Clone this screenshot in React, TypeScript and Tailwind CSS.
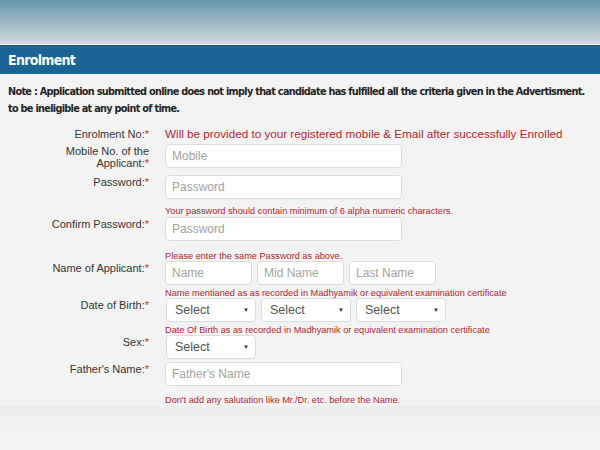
const Star = () => <span className="text-[#c0303a]">*</span>;

function Label({ children }: { children: React.ReactNode }) {
  return (
    <div className="w-[149px] h-[24px] shrink-0 text-right text-[11px] leading-[12px] text-[#333] pt-[1px]">
      {children}
      <Star />
    </div>
  );
}

function Hint({ text, className = "" }: { text: string; className?: string }) {
  return (
    <div
      className={`ml-[165px] h-[10px] text-[9.2px] leading-[10px] text-[#b3242e] whitespace-nowrap ${className}`}
    >
      {text}
    </div>
  );
}

function TextBox({ placeholder, w = "w-[237px]" }: { placeholder: string; w?: string }) {
  return (
    <div
      className={`${w} h-[24px] shrink-0 bg-white border border-[#dcdcdc] rounded-[4px] flex items-center pl-[6px] text-[12px] text-[#a3a3a3]`}
    >
      {placeholder}
    </div>
  );
}

function SelectBox({ w = "w-[90px]" }: { w?: string }) {
  return (
    <div
      className={`${w} h-[24px] shrink-0 bg-white border border-[#dcdcdc] rounded-[4px] flex items-center justify-between pl-[8px] pr-[6px] text-[12.5px] text-[#555]`}
    >
      <span>Select</span>
      <span className="text-[6px] text-[#333]">▼</span>
    </div>
  );
}

export default function App() {
  return (
    <div
      className="w-[600px] h-[450px] overflow-hidden bg-[#f3f3f3] flex flex-col"
      style={{ fontFamily: '"Liberation Sans", Arial, sans-serif' }}
    >
      {/* banner strip */}
      <div className="h-[44px] shrink-0 bg-gradient-to-b from-[#6598af] to-[#d2d9dc]" />
      <div className="h-[1px] shrink-0 bg-white" />
      <div className="h-[29px] shrink-0 bg-[#1b6493] border-t border-[#16557d] flex items-center px-[8px]">
        <span
          className="text-white font-bold text-[14px] tracking-[-0.7px]"
          style={{ fontFamily: '"DejaVu Sans Condensed", "DejaVu Sans", sans-serif' }}
        >
          Enrolment
        </span>
      </div>

      {/* note */}
      <div
        className="pt-[9px] pl-[8px] font-bold text-[10.8px] tracking-[-0.7px] leading-[17px] text-[#222] whitespace-nowrap"
        style={{ fontFamily: '"DejaVu Sans Condensed", "DejaVu Sans", sans-serif' }}
      >
        <div>
          Note : Application submitted online does not imply that candidate has fulfilled all the criteria given in the Advertisment.
        </div>
        <div>to be ineligible at any point of time.</div>
      </div>

      {/* form */}
      <div className="flex flex-col">
        <div className="flex items-center gap-[16px] mt-[9px] h-[16px]">
          <div className="w-[149px] shrink-0 text-right text-[11px] text-[#333]">
            Enrolment No:<Star />
          </div>
          <span className="text-[11.7px] text-[#b3262f] whitespace-nowrap">
            Will be provided to your registered mobile &amp; Email after successfully Enrolled
          </span>
        </div>

        <div className="flex gap-[16px] mt-[2px]">
          <Label>
            Mobile No. of the
            <br />
            Applicant:
          </Label>
          <TextBox placeholder="Mobile" />
        </div>

        <div className="flex gap-[16px] mt-[7px]">
          <Label>Password:</Label>
          <TextBox placeholder="Password" />
        </div>

        <Hint
          className="mt-[7px] mb-[1px]"
          text="Your password should contain minimum of 6 alpha numeric characters."
        />

        <div className="flex gap-[16px]">
          <Label>Confirm Password:</Label>
          <TextBox placeholder="Password" />
        </div>

        <Hint className="mt-[10px]" text="Please enter the same Password as above." />

        <div className="flex gap-[16px]">
          <Label>Name of Applicant:</Label>
          <div className="flex gap-[5px]">
            <TextBox placeholder="Name" w="w-[87px]" />
            <TextBox placeholder="Mid Name" w="w-[87px]" />
            <TextBox placeholder="Last Name" w="w-[87px]" />
          </div>
        </div>

        <Hint
          className="mt-[3px]"
          text="Name mentianed as as recorded in Madhyamik or equivalent examination certificate"
        />

        <div className="flex gap-[16px]">
          <Label>Date of Birth:</Label>
          <div className="flex gap-[5px] pl-[1px]">
            <SelectBox />
            <SelectBox />
            <SelectBox />
          </div>
        </div>

        <Hint
          className="mt-[3px]"
          text="Date Of Birth as as recorded in Madhyamik or equivalent examination certificate"
        />

        <div className="flex gap-[16px]">
          <Label>Sex:</Label>
          <div className="pl-[1px]">
            <SelectBox />
          </div>
        </div>

        <div className="flex gap-[16px] mt-[3px]">
          <Label>Father's Name:</Label>
          <TextBox placeholder="Father's Name" />
        </div>

        <Hint className="mt-[9px]" text="Don't add any salutation like Mr./Dr. etc. before the Name." />
      </div>

      {/* faded lower edge */}
      <div className="flex-1 mt-[1px] bg-gradient-to-b from-[#eeeded] to-[#f5f4f4]" />
    </div>
  );
}
